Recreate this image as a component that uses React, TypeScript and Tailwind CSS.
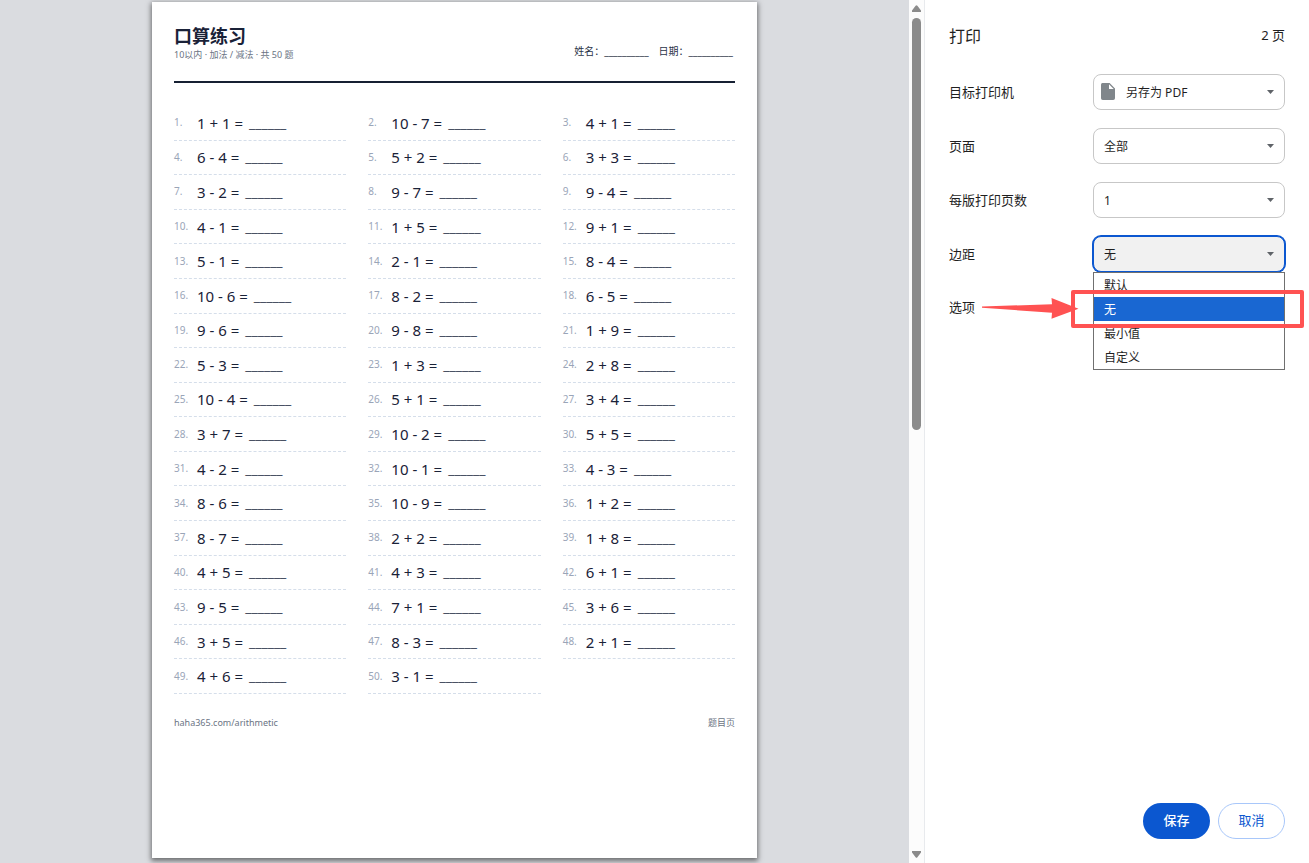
import type { ReactNode } from "react";
import clsx from "clsx";

const problems = [
  "1 + 1", "10 - 7", "4 + 1",
  "6 - 4", "5 + 2", "3 + 3",
  "3 - 2", "9 - 7", "9 - 4",
  "4 - 1", "1 + 5", "9 + 1",
  "5 - 1", "2 - 1", "8 - 4",
  "10 - 6", "8 - 2", "6 - 5",
  "9 - 6", "9 - 8", "1 + 9",
  "5 - 3", "1 + 3", "2 + 8",
  "10 - 4", "5 + 1", "3 + 4",
  "3 + 7", "10 - 2", "5 + 5",
  "4 - 2", "10 - 1", "4 - 3",
  "8 - 6", "10 - 9", "1 + 2",
  "8 - 7", "2 + 2", "1 + 8",
  "4 + 5", "4 + 3", "6 + 1",
  "9 - 5", "7 + 1", "3 + 6",
  "3 + 5", "8 - 3", "2 + 1",
  "4 + 6", "3 - 1",
];

const marginOptions = ["默认", "无", "最小值", "自定义"];

function Worksheet() {
  return (
    <article className="aspect-[210/297] w-[605px] max-w-full bg-white px-[22px] pt-[23px] text-[#1a2238] shadow-[0_2px_5px_1px_rgba(0,0,0,0.5)]">
      <header className="flex h-[58px] items-start justify-between border-b-2 border-[#162033]">
        <div>
          <h1 className="text-lg leading-[22px] font-bold">口算练习</h1>
          <p className="text-[9px] leading-4 text-[#6b7484]">10以内 · 加法 / 减法 · 共 50 题</p>
        </div>
        <div className="flex gap-2.5 pt-4.5 pr-0.5 text-[10px] leading-4 text-[#2b3448]">
          <span>姓名：__________</span>
          <span>日期：__________</span>
        </div>
      </header>

      <ol className="mt-[23px] grid h-[588px] grid-cols-3 grid-rows-17 gap-x-[22px]">
        {problems.map((p, i) => (
          <li key={i} className="flex items-center border-b border-dashed border-[#d5deea]">
            <span className="w-[23px] text-[10px] text-[#9aa5b8]">{i + 1}.</span>
            <span className="text-[15px] leading-5">{p} =</span>
            <span className="ml-1.5 text-sm leading-5 text-[#4a5264]">______</span>
          </li>
        ))}
      </ol>

      <footer className="mt-[21px] flex justify-between text-[9px] leading-4 text-[#6b7484]">
        <span>haha365.com/arithmetic</span>
        <span>题目页</span>
      </footer>
    </article>
  );
}

function Scrollbar() {
  return (
    <div className="flex w-[15px] shrink-0 flex-col items-center bg-[#fcfcfc] py-[5px]">
      <svg width="9" height="7" viewBox="0 0 9 7" className="shrink-0">
        <path d="M3.6 .8Q4.5-.4 5.4 .8L9 5.6V7H0V5.6Z" fill="#8b8b8b" />
      </svg>
      <div className="mt-1.5 flex w-full flex-1 justify-center">
        <div className="h-[49.5%] w-[9px] rounded-full bg-[#8b8b8b]" />
      </div>
      <svg width="9" height="7" viewBox="0 0 9 7" className="shrink-0">
        <path d="M3.6 6.2Q4.5 7.4 5.4 6.2L9 1.4V0H0V1.4Z" fill="#8b8b8b" />
      </svg>
    </div>
  );
}

type SelectRowProps = {
  id: string;
  label: string;
  options: string[];
  value?: string;
  icon?: ReactNode;
  open?: boolean;
  children?: ReactNode;
};

function SelectRow({ id, label, options, value, icon, open, children }: SelectRowProps) {
  return (
    <div className="flex h-9 items-center justify-between">
      <label htmlFor={id} className="text-[13px] leading-5">{label}</label>
      <div className="relative h-9 w-48">
        <select
          id={id}
          defaultValue={value ?? options[0]}
          className={clsx(
            "h-full w-full appearance-none rounded-lg border pt-0.5 pr-8 text-xs outline-none",
            icon ? "pl-8" : "pl-2.5",
            open ? "border-[#0b57d0] bg-[#f1f1f1] ring-1 ring-[#0b57d0]" : "border-[#c7c7c7] bg-white",
          )}
        >
          {options.map((o) => (
            <option key={o}>{o}</option>
          ))}
        </select>
        {icon}
        <svg
          width="7"
          height="4"
          viewBox="0 0 7 4"
          className="pointer-events-none absolute top-4 right-[11px]"
        >
          <path d="M0 0h7L3.5 4Z" fill="#5f6368" />
        </svg>
        {children}
      </div>
    </div>
  );
}

function FileIcon() {
  return (
    <svg width="14" height="17" viewBox="0 0 14 17" className="pointer-events-none absolute top-[9px] left-2">
      <path
        fillRule="evenodd"
        d="M2 0H8.6L14 5.4V15.2A1.8 1.8 0 0 1 12.2 17H1.8A1.8 1.8 0 0 1 0 15.2V1.8A1.8 1.8 0 0 1 2 0ZM8 1.3V6H12.7Z"
        fill="#80868b"
      />
    </svg>
  );
}

function MarginMenu() {
  return (
    <ul role="listbox" aria-label="边距" className="absolute top-full left-0 z-10 w-full border border-[#707070] bg-white text-xs">
      {marginOptions.map((o) => (
        <li
          key={o}
          role="option"
          aria-selected={o === "无"}
          className={clsx("h-6 px-2.5 leading-[26px]", o === "无" && "relative z-10 bg-[#1967d2] text-white")}
        >
          {o}
          {o === "无" && <Callout />}
        </li>
      ))}
    </ul>
  );
}

// red frame around the option plus the arrow that points at it
function Callout() {
  return (
    <>
      <div className="pointer-events-none absolute -inset-y-[7px] -right-5 -left-[23px] rounded-xs border-4 border-[#ff5252]" />
      <svg
        width="97"
        height="22"
        viewBox="0 0 97 22"
        className="pointer-events-none absolute top-0 right-full mr-[15px]"
      >
        <path d="M0 9.6 70 7.2 69.5 1 96.5 11.8 69.5 21.8 70 15.8 0 10.8Z" fill="#ff5252" />
      </svg>
    </>
  );
}

export default function App() {
  return (
    <div className="flex min-h-screen bg-white font-['Noto_Sans','Noto_Sans_CJK_SC',sans-serif] text-[#1f1f1f]">
      <main className="flex min-w-0 flex-1 items-start justify-center bg-[#dadce0] pt-0.5 pb-1">
        <Worksheet />
      </main>
      <Scrollbar />

      <aside className="flex w-[385px] shrink-0 flex-col border-l border-[#e8eaed] px-6 pb-6">
        <header className="mb-0.5 flex h-18 items-center justify-between">
          <h2 className="text-base">打印</h2>
          <span className="text-[13px]">2 页</span>
        </header>

        <form className="flex flex-1 flex-col gap-[18px]">
          <SelectRow id="printer" label="目标打印机" options={["另存为 PDF"]} icon={<FileIcon />} />
          <SelectRow id="pages" label="页面" options={["全部"]} />
          <SelectRow id="per-sheet" label="每版打印页数" options={["1", "2", "4"]} />
          <SelectRow id="margins" label="边距" options={marginOptions} value="无" open>
            <MarginMenu />
          </SelectRow>
          <div className="flex h-9 items-center text-[13px]">选项</div>
        </form>

        <div className="flex justify-end gap-2 text-[13px]">
          <button type="button" className="h-9 w-[67px] rounded-full bg-[#0b57d0] font-medium text-white">
            保存
          </button>
          <button type="button" className="h-9 w-[67px] rounded-full border border-[#a8c7fa] text-[#0b57d0]">
            取消
          </button>
        </div>
      </aside>
    </div>
  );
}
